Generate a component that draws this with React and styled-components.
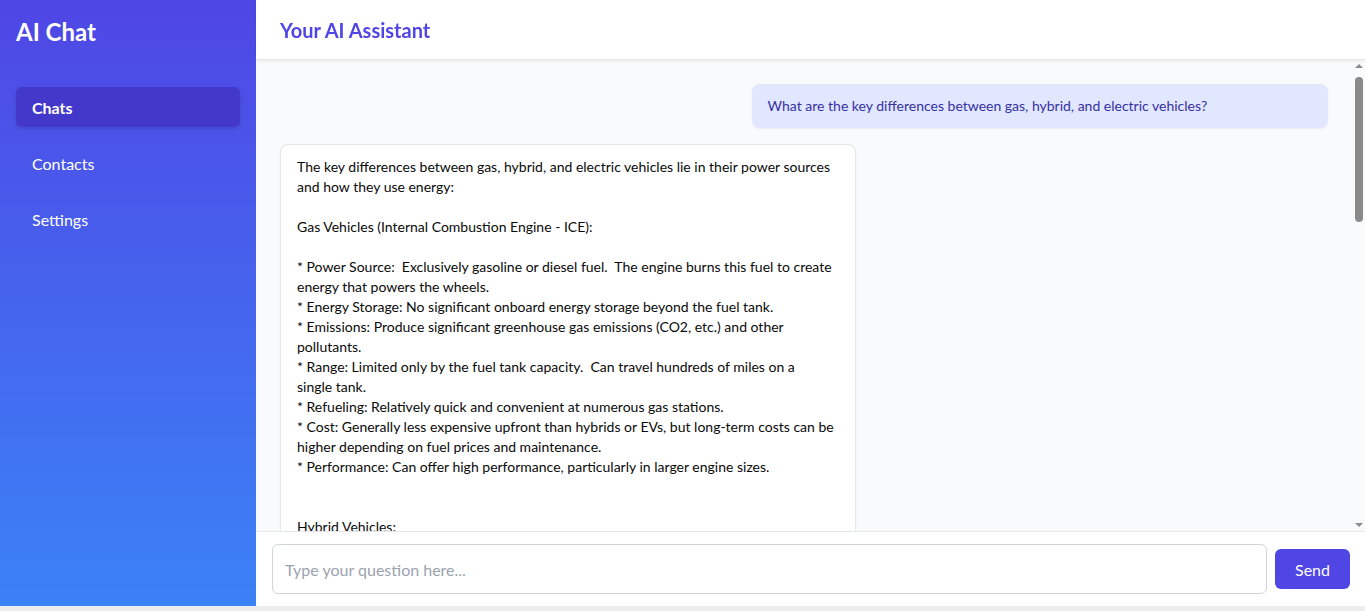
import styled, { createGlobalStyle } from 'styled-components'

const GlobalStyle = createGlobalStyle`
  * { box-sizing: border-box; }
  html, body {
    margin: 0;
    padding: 0;
    height: 100%;
    background: #ececec;
    font-family: Lato, "Noto Sans", sans-serif;
  }
`;

const Layout = styled.div`
  display: flex;
  height: calc(100vh - 5px);
  overflow: hidden;
`;

const Sidebar = styled.aside`
  width: 256px;
  flex-shrink: 0;
  display: flex;
  flex-direction: column;
  padding: 16px;
  background: linear-gradient(to bottom, #4f46e5, #3b82f6);
  color: #fff;
`;

const Brand = styled.h1`
  margin: 0 0 39px;
  font-size: 24px;
  font-weight: 700;
  line-height: 32px;
`;

const Nav = styled.nav`
  display: flex;
  flex-direction: column;
  gap: 16px;
`;

const NavItem = styled.a`
  display: flex;
  align-items: center;
  height: 40px;
  padding: 0 16px;
  border-radius: 6px;
  color: #fff;
  font-size: 16px;
  font-weight: ${props => (props.$active ? 700 : 400)};
  text-decoration: none;
  background: ${props => (props.$active ? '#4338ca' : 'transparent')};
  box-shadow: ${props => (props.$active ? '0 2px 4px rgba(0,0,0,0.12)' : 'none')};
`;

const Main = styled.main`
  flex: 1;
  min-width: 0;
  display: flex;
  flex-direction: column;
  background: #fff;
`;

const Header = styled.header`
  height: 60px;
  flex-shrink: 0;
  display: flex;
  align-items: center;
  padding: 0 24px;
  background: #fff;
  border-bottom: 1px solid #e5e7eb;
  box-shadow: 0 1px 3px rgba(0,0,0,0.08);
  z-index: 1;
`;

const Title = styled.h2`
  margin: 0;
  font-size: 20px;
  font-weight: 700;
  color: #4f46e5;
`;

const ChatPane = styled.div`
  flex: 1;
  min-height: 0;
  position: relative;
  display: flex;
`;

const Messages = styled.section`
  flex: 1;
  overflow-y: auto;
  display: flex;
  flex-direction: column;
  gap: 16px;
  padding: 24px 37px 0 24px;
  background: #f9fafb;
  scrollbar-width: none;
  &::-webkit-scrollbar { display: none; }
`;

const ScrollTrack = styled.div`
  position: absolute;
  top: 0;
  right: 0;
  bottom: 0;
  width: 12px;
  display: flex;
  flex-direction: column;
  align-items: center;
  padding: 4px 0;
  background: #f9fafb;
`;

const ScrollArrow = styled.div`
  width: 0;
  height: 0;
  border-left: 4px solid transparent;
  border-right: 4px solid transparent;
  ${props => (props.$down
    ? 'border-top: 4px solid #8a8a8a; margin-top: auto;'
    : 'border-bottom: 4px solid #8a8a8a;')}
`;

const ScrollThumb = styled.div`
  width: 8px;
  height: 145px;
  margin-top: 9px;
  border-radius: 4px;
  background: #8a8a8a;
`;

const Bubble = styled.div`
  max-width: 55%;
  align-self: ${props => (props.$user ? 'flex-end' : 'flex-start')};
  padding: 12px 16px;
  border-radius: 8px;
  font-size: 14px;
  line-height: 20px;
  white-space: pre-wrap;
  color: ${props => (props.$user ? '#3730a3' : '#0a0a0a')};
  background: ${props => (props.$user ? '#e0e7ff' : '#fff')};
  border: ${props => (props.$user ? 'none' : '1px solid #e5e7eb')};
  box-shadow: 0 1px 2px rgba(0,0,0,0.06);
  width: ${props => (props.$user ? '55%' : 'auto')};
`;

const Composer = styled.form`
  flex-shrink: 0;
  display: flex;
  align-items: center;
  gap: 8px;
  padding: 12px 15px 12px 16px;
  background: #fff;
  border-top: 1px solid #e5e7eb;
`;

const Input = styled.input`
  flex: 1;
  height: 50px;
  padding: 0 12px;
  border: 1px solid #d1d5db;
  border-radius: 6px;
  font-family: inherit;
  font-size: 16px;
  color: #111;
  outline: none;
  &::placeholder { color: #9ca3af; }
`;

const SendButton = styled.button`
  height: 40px;
  width: 75px;
  border: none;
  border-radius: 6px;
  background: #4f46e5;
  color: #fff;
  font-family: inherit;
  font-size: 16px;
  cursor: pointer;
`;

const answer = `The key differences between gas, hybrid, and electric vehicles lie in their power sources and how they use energy:

Gas Vehicles (Internal Combustion Engine - ICE):

* Power Source:  Exclusively gasoline or diesel fuel.  The engine burns this fuel to create energy that powers the wheels.
* Energy Storage: No significant onboard energy storage beyond the fuel tank.
* Emissions: Produce significant greenhouse gas emissions (CO2, etc.) and other pollutants.
* Range: Limited only by the fuel tank capacity.  Can travel hundreds of miles on a
single tank.
* Refueling: Relatively quick and convenient at numerous gas stations.
* Cost: Generally less expensive upfront than hybrids or EVs, but long-term costs can be higher depending on fuel prices and maintenance.
* Performance: Can offer high performance, particularly in larger engine sizes.


Hybrid Vehicles:

* Power Source:  A combination of a gasoline engine and an electric motor with a small battery pack.
* Energy Storage: The battery is charged by the engine and regenerative braking.
* Emissions: Lower emissions than gas vehicles, particularly in city driving.`;

export default function App() {
  return (
    <>
      <GlobalStyle />
      <Layout>
        <Sidebar>
          <Brand>AI Chat</Brand>
          <Nav>
            <NavItem $active href="#">Chats</NavItem>
            <NavItem href="#">Contacts</NavItem>
            <NavItem href="#">Settings</NavItem>
          </Nav>
        </Sidebar>
        <Main>
          <Header>
            <Title>Your AI Assistant</Title>
          </Header>
          <ChatPane>
            <Messages>
              <Bubble $user>What are the key differences between gas, hybrid, and electric vehicles?</Bubble>
              <Bubble>{answer}</Bubble>
            </Messages>
            <ScrollTrack>
              <ScrollArrow />
              <ScrollThumb />
              <ScrollArrow $down />
            </ScrollTrack>
          </ChatPane>
          <Composer onSubmit={e => e.preventDefault()}>
            <Input placeholder="Type your question here..." />
            <SendButton type="submit">Send</SendButton>
          </Composer>
        </Main>
      </Layout>
    </>
  )
}
